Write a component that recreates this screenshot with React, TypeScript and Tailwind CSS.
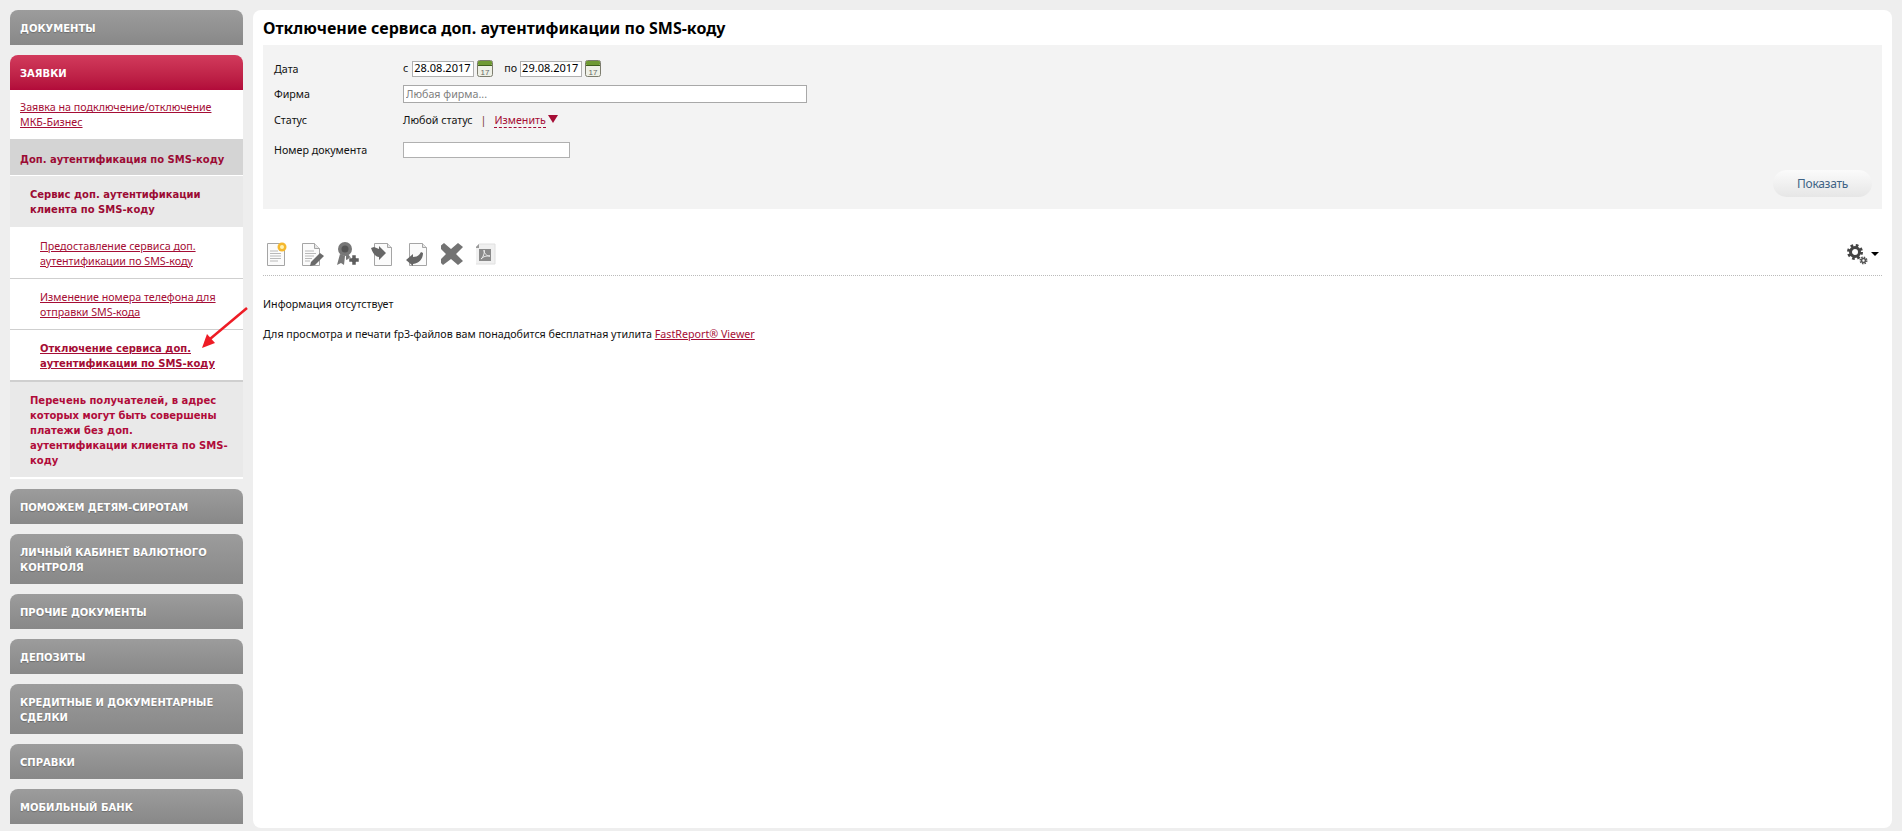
const boldFont = "font-['DejaVu_Sans',sans-serif] text-[10px] font-bold"

function MenuHead({ children, active }: { children: React.ReactNode; active?: boolean }) {
  return (
    <div
      className={
        active
          ? `rounded-t-lg bg-gradient-to-b from-[#d23a5c] to-[#b20a3a] px-[10px] pt-[11px] pb-[9px] leading-[15px] text-white ${boldFont}`
          : `rounded-t-lg bg-gradient-to-b from-[#9c9c9c] to-[#888888] px-[10px] pt-[11px] pb-[9px] leading-[15px] text-white [text-shadow:0_1px_1px_rgba(0,0,0,0.25)] ${boldFont}`
      }
    >
      {children}
    </div>
  )
}

function SubLink({ children, current }: { children: React.ReactNode; current?: boolean }) {
  return (
    <div className="h-[52px] border-b border-[#cfcfcf] bg-white pt-[11px] pr-[8px] pl-[30px] leading-[15px] first:pt-[12px] last:border-b-2 [&:nth-child(2)]:h-[51px]">
      <a className={current ? `text-[#a50d35] underline ${boldFont}` : "text-[#a50d35] underline"}>{children}</a>
    </div>
  )
}

function Calendar() {
  return (
    <svg width="16" height="17" viewBox="0 0 16 17" className="ml-[3px] shrink-0">
      <rect x="0.5" y="0.5" width="15" height="16" rx="2" fill="#eef0e6" stroke="#7d7d6f" />
      <rect x="1" y="1" width="14" height="4" rx="1" fill="#6f9a33" />
      <rect x="1" y="5" width="14" height="1" fill="#3f5f1c" />
      <text x="8" y="14.5" fontSize="8" textAnchor="middle" fill="#666" fontFamily="Liberation Sans, sans-serif">17</text>
    </svg>
  )
}

function DocBase({ children, flip }: { children?: React.ReactNode; flip?: boolean }) {
  return (
    <svg width="24" height="26" viewBox="0 0 24 26" className="shrink-0">
      <path d={flip ? "M3.5 2.5h13l4 4v18h-17z" : "M1.5 2.5h12l5 5v17h-17z"} fill="#fbfbfb" stroke="#a5a5a5" strokeWidth="1" />
      <path d={flip ? "M16.5 2.5v4h4" : "M13.5 2.5v5h5"} fill="#e5e5e5" stroke="#a5a5a5" />
      {children}
    </svg>
  )
}

function Gears() {
  return (
    <svg width="21" height="21" viewBox="0 0 21 21" className="shrink-0">
      <circle cx="8" cy="8" r="4.5" fill="none" stroke="#444" strokeWidth="3" />
      <circle cx="8" cy="8" r="6.5" fill="none" stroke="#444" strokeWidth="3" strokeDasharray="2.6 2.5" />
      <circle cx="16.5" cy="16.5" r="2" fill="none" stroke="#555" strokeWidth="1.6" />
      <circle cx="16.5" cy="16.5" r="3.2" fill="none" stroke="#555" strokeWidth="1.6" strokeDasharray="1.4 1.1" />
    </svg>
  )
}

export default function App() {
  return (
    <div className="flex h-[831px] items-start gap-[10px] overflow-hidden bg-[#eeeeee] px-[10px] pt-[10px] font-['Noto_Sans',sans-serif] text-[10.7px] text-[#111]">
      <aside className="relative flex w-[233px] shrink-0 flex-col gap-[10px]">
        <MenuHead>ДОКУМЕНТЫ</MenuHead>
        <div>
          <MenuHead active>ЗАЯВКИ</MenuHead>
          <div className="h-[50px] border-b border-[#d4d4d4] bg-white px-[10px] pt-[10px] leading-[15px]">
            <a className="text-[#a50d35] underline">Заявка на подключение/отключение МКБ-Бизнес</a>
          </div>
          <div className={`h-[36px] border-b border-white bg-[#d4d4d4] px-[10px] pt-[12px] leading-[15px] text-[#9c0b34] ${boldFont}`}>
            Доп. аутентификация по SMS-коду
          </div>
          <div className={`h-[51px] bg-[#e9e9e9] pt-[11px] pr-[20px] pl-[20px] leading-[15px] text-[#9c0b34] ${boldFont}`}>
            Сервис доп. аутентификации клиента по SMS-коду
          </div>
          <div>
            <SubLink>Предоставление сервиса доп. аутентификации по SMS-коду</SubLink>
            <SubLink>Изменение номера телефона для отправки SMS-кода</SubLink>
            <SubLink current>Отключение сервиса доп. аутентификации по SMS-коду</SubLink>
          </div>
          <div className={`h-[95px] bg-[#e9e9e9] pt-[11px] pr-[10px] pl-[20px] leading-[15px] text-[#b00c3a] ${boldFont}`}>
            Перечень получателей, в адрес которых могут быть совершены платежи без доп.
            <br />
            аутентификации клиента по SMS-коду
          </div>
          <div className="h-[2px] bg-white" />
        </div>
        <MenuHead>ПОМОЖЕМ ДЕТЯМ-СИРОТАМ</MenuHead>
        <MenuHead>ЛИЧНЫЙ КАБИНЕТ ВАЛЮТНОГО КОНТРОЛЯ</MenuHead>
        <MenuHead>ПРОЧИЕ ДОКУМЕНТЫ</MenuHead>
        <MenuHead>ДЕПОЗИТЫ</MenuHead>
        <MenuHead>КРЕДИТНЫЕ И ДОКУМЕНТАРНЫЕ СДЕЛКИ</MenuHead>
        <MenuHead>СПРАВКИ</MenuHead>
        <MenuHead>МОБИЛЬНЫЙ БАНК</MenuHead>

        {/* annotation arrow */}
        <svg width="60" height="50" viewBox="0 0 60 50" className="absolute top-[297px] left-[190px]">
          <path d="M47 1 L10 32" stroke="#ee1c25" strokeWidth="2.5" fill="none" />
          <path d="M2 41 L7 27 L15 36 Z" fill="#ee1c25" />
        </svg>
      </aside>

      <main className="h-[818px] flex-1 rounded-lg bg-white px-[10px]">
        <h1 className="h-[35px] pt-[7px] text-[16px] leading-[22px] font-bold text-black">
          Отключение сервиса доп. аутентификации по SMS-коду
        </h1>

        <section className="h-[164px] bg-[#f3f3f3] pt-[15px] pr-[10px] pl-[11px]">
          <div className="flex h-[21px] items-start">
            <div className="w-[129px] pt-[1px]">Дата</div>
            <div className="flex items-center">
              <span className="mr-[4px]">с</span>
              <input readOnly value="28.08.2017" className="h-[16px] w-[62px] border border-[#b0b0b0] bg-white px-[1px] text-[11px] text-black" />
              <Calendar />
              <span className="mr-[3px] ml-[11px]">по</span>
              <input readOnly value="29.08.2017" className="h-[16px] w-[62px] border border-[#b0b0b0] bg-white px-[1px] text-[11px] text-black" />
              <Calendar />
            </div>
          </div>
          <div className="flex h-[26px] items-center">
            <div className="w-[129px]">Фирма</div>
            <input placeholder="Любая фирма..." className="h-[18px] w-[404px] border border-[#a8a8a8] bg-white px-[2px] text-[10.7px] placeholder:text-[#808080]" />
          </div>
          <div className="flex h-[26px] items-center">
            <div className="w-[129px]">Статус</div>
            <span>Любой статус</span>
            <span className="mx-[8px] text-[#7a3a2a]">|</span>
            <a className="border-b border-dashed border-[#a50d35] leading-[14px] text-[#a50d35]">Изменить</a>
            <span className="mt-[-2px] ml-[2px] h-0 w-0 border-x-[5px] border-t-[8px] border-x-transparent border-t-[#a50d35]" />
          </div>
          <div className="mt-[6px] flex h-[22px] items-center">
            <div className="w-[129px]">Номер документа</div>
            <input className="h-[16px] w-[167px] border border-[#b0b0b0] bg-white" />
          </div>
          <div className="mt-[9px] flex justify-end">
            <button className="h-[27px] w-[99px] rounded-full bg-gradient-to-b from-[#fbfbfb] to-[#e6e6e6] text-[12px] tracking-[-0.3px] text-[#3f6385]">
              Показать
            </button>
          </div>
        </section>

        <div className="mt-[32px] flex h-[35px] items-start justify-between border-b border-dotted border-[#bbbbbb]">
          <div className="flex items-center gap-[11px] pl-[3px]">
            <DocBase>
              <path d="M4 10h8M4 12.5h11M4 15h11M4 17.5h11M4 20h8" stroke="#b9b9b9" />
              <circle cx="16" cy="6" r="4.5" fill="#f5b82e" />
              <circle cx="16" cy="6" r="2" fill="#fff2b0" />
            </DocBase>
            <DocBase>
              <path d="M4 10h9M4 12.5h11M4 15h9M4 17.5h7M4 20h5" stroke="#b9b9b9" />
              <path d="M9 25l1-4 9-9 4 3-9 9z" fill="#6a6a6a" />
            </DocBase>
            <svg width="24" height="26" viewBox="0 0 24 26" className="shrink-0">
              <circle cx="9" cy="8" r="7" fill="#777" />
              <circle cx="9" cy="8" r="3.5" fill="#555" />
              <path d="M4 13L1 24l4-2 3 2 1-9zM12 13l3 4-5 2 0-5z" fill="#777" />
              <path d="M16 14h4v3h3v4h-3v3h-4v-3h-3v-4h3z" fill="#5d5d5d" stroke="#fff" strokeWidth="0.5" />
            </svg>
            <DocBase flip>
              <path d="M0 7l3-1 5 2V5l7 7-7 7v-3c-3 0-6-3-8-9z" fill="#666" />
            </DocBase>
            <DocBase flip>
              <path d="M0 19L7 13v3c3 0 6-1 8-5l2 1c0 5-3 10-10 11v2z" fill="#666" />
            </DocBase>
            <svg width="24" height="26" viewBox="0 0 24 26" className="shrink-0">
              <path transform="translate(-2 0)" d="M5 2l7 6 7-6 5 4-7 7 7 7-5 4-7-6-8 6-4-4 7-7-7-7z" fill="#737373" />
            </svg>
            <svg width="24" height="26" viewBox="0 0 24 26" className="shrink-0">
              <g transform="translate(-3 0)">
                <path d="M6 3h16v20H2V7z" fill="#f0f0f0" stroke="#e0e0e0" />
                <path d="M2 7l4-4v4z" fill="#9a9a9a" />
                <rect x="6" y="8" width="12" height="12" fill="#8a8a8a" />
                <path d="M8 18c2-1 4-7 3-9 0 3 2 6 6 6-4 0-6 0-9 3z" fill="none" stroke="#eee" />
              </g>
            </svg>
          </div>
          <div className="flex items-start pt-[3px] pr-[3px]">
            <Gears />
            <span className="mt-[8px] ml-[3px] h-0 w-0 border-x-[4px] border-t-[4px] border-x-transparent border-t-black" />
          </div>
        </div>

        <p className="mt-[21px] leading-[15px]">Информация отсутствует</p>
        <p className="mt-[15px] leading-[15px]">
          Для просмотра и печати fp3-файлов вам понадобится бесплатная утилита{" "}
          <a className="text-[#a50d35] underline">FastReport® Viewer</a>
        </p>
      </main>
    </div>
  )
}
